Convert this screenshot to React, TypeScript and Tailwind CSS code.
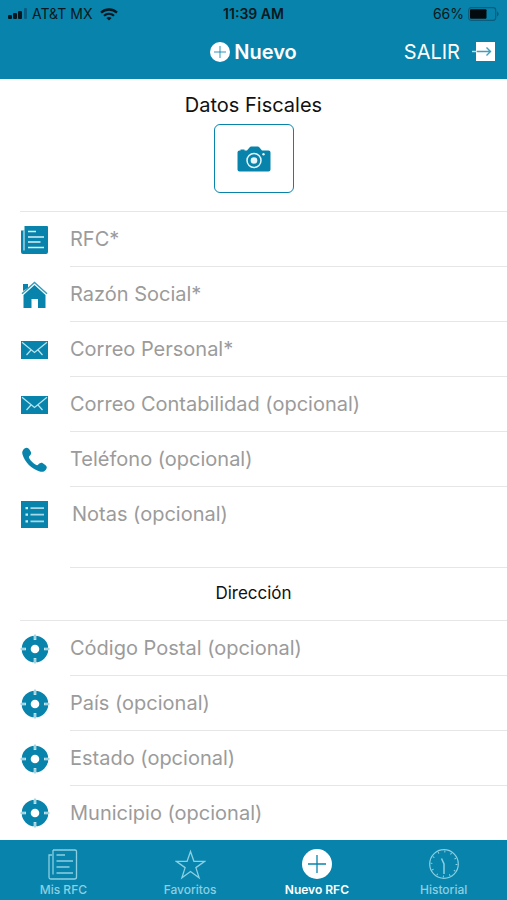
import type { ReactNode } from "react";

const SignalIcon = () => (
  <svg width="20" height="12" viewBox="0 0 20 12" fill="#071820" aria-hidden="true">
    <rect x="0" y="7" width="4" height="4" rx="1" />
    <rect x="5" y="5" width="4" height="6" rx="1" />
    <rect x="10" y="3" width="4" height="8" rx="1" />
    <rect x="16" y="0" width="3" height="11" rx="1" fill="#0a5d82" />
  </svg>
);

const WifiIcon = () => (
  <svg width="18" height="13" viewBox="0 0 18 13" fill="none" stroke="#071820" aria-hidden="true">
    <path d="M1 4.600C5.500.4 12.500.4 17 4.600" strokeWidth="2.400" />
    <path d="M4 7.800c2.900-2.600 7.100-2.600 10 0" strokeWidth="2.200" />
    <path d="M6.400 9.900c1.500-1.300 3.700-1.300 5.200 0L9 12.600z" fill="#071820" stroke="none" />
  </svg>
);

const BatteryIcon = () => (
  <svg width="31" height="14" viewBox="0 0 31 14" aria-hidden="true">
    <rect x=".7" y=".7" width="27" height="12.600" rx="2.500" fill="none" stroke="#0a5d7c" strokeWidth="1.200" />
    <rect x="2" y="2.200" width="16.500" height="9.600" rx="1" fill="#040b0e" />
    <path d="M29 4.500c2.200.8 2.200 4.200 0 5z" fill="#0a5d7c" />
  </svg>
);

const PlusCircle = ({ size }: { size: number }) => (
  <svg width={size} height={size} viewBox="0 0 30 30" aria-hidden="true">
    <circle cx="15" cy="15" r="15" fill="#fff" />
    <path d="M15 6v18M6 15h18" stroke="#0884ac" strokeWidth="1.300" />
  </svg>
);

const ExitIcon = () => (
  <svg width="23" height="20" viewBox="0 0 23 20" fill="none" aria-hidden="true">
    <path d="M4 0h19v19H4z" fill="#fff" />
    <path d="M0 9.500h5" stroke="#b8deea" strokeWidth="1.400" />
    <path d="M5 9.500h13M14.500 5.500l4 4-4 4" stroke="#3f9fbd" strokeWidth="1.400" />
  </svg>
);

const CameraIcon = () => (
  <svg width="34" height="26" viewBox="0 0 34 26" aria-hidden="true">
    <path
      d="M2.500 4.500h1V3.400h4v1.100H10l2.500-3Q13.200.6 14.300.6h6.400q1.100 0 1.800.9l2.500 3h6.500q2 0 2 2v17q0 2-2 2H2.500q-2 0-2-2v-17q0-2 2-2z"
      fill="#0884ac"
    />
    <circle cx="17" cy="14.500" r="7" fill="none" stroke="#e5f5f9" strokeWidth="1.500" />
    <circle cx="17" cy="14.500" r="3.300" fill="#e5f5f9" />
    <circle cx="26.500" cy="8.300" r="1.200" fill="#e5f5f9" />
  </svg>
);

const DocumentIcon = () => (
  <svg width="28" height="28" viewBox="0 0 28 28" aria-hidden="true">
    <path d="M3.500 0H26q1 0 1 1v25q0 2-2 2H2q-2 0-2-2V4.500h3.500z" fill="#0884ac" />
    <path d="M3 4.500V24.500" fill="none" stroke="#d7f0f7" strokeWidth="1.100" />
    <path d="M7 5.500h8M7 11h16M7 16h12.500M7 21.500h16" stroke="#d7f0f7" strokeWidth="1.300" />
  </svg>
);

const HouseIcon = () => (
  <svg width="28" height="28" viewBox="0 0 28 28" aria-hidden="true">
    <path d="M2 10V3h5v4" fill="#0884ac" />
    <path d="M1 12.800L13.500 1.500 26 12.800" fill="none" stroke="#3c9dbb" strokeWidth="1.500" />
    <path d="M2.500 14L13.500 4l11 10v13H17v-9h-6.500v9h-8z" fill="#0884ac" />
  </svg>
);

const MailIcon = () => (
  <svg width="28" height="18" viewBox="0 0 28 18" fill="none" stroke="#b8e6f1" strokeWidth="1.200" aria-hidden="true">
    <path d="M0 0h27v18H0z" fill="#0884ac" stroke="none" />
    <path d="M1 1.200l12.500 10.300L26 1.200M5.500 14l4.500-5M21.500 14L17 9" />
  </svg>
);

const PhoneIcon = () => (
  <svg width="28" height="28" viewBox="0 0 28 28" fill="#0884ac" aria-hidden="true">
    <path d="M3.500 2.500C5.500 1 7.200 1.500 8.600 3.800l1.300 2.300c.7 1.500 0 2.700-1.400 3.900-.8.700-.7 1.500-.1 2.500 1.700 2.700 3.700 4.700 6.400 6.300 1 .6 1.800.6 2.500-.2 1.500-1.700 3-2.400 4.500-1.400l2.500 1.800c2 1.500 1.900 3 .4 4.900-1.500 1.800-3.400 2.300-6 1.600C10.500 23 3.800 16.200 1.500 8.500.8 6 1.500 4 3.500 2.500z" />
  </svg>
);

const ListIcon = () => (
  <svg width="28" height="28" viewBox="0 0 28 28" aria-hidden="true">
    <path d="M0 0h27v27H0z" fill="#0884ac" />
    <path d="M9.500 7.200h13.500M9.500 13.700h13.500M9.500 20.300h13.500" stroke="#a6d9e7" strokeWidth="1.700" />
    <path d="M4.500 7.200h2.500M4.500 13.700h2.500M4.500 20.300h2.500" stroke="#c9edf6" strokeWidth="2.200" />
  </svg>
);

const TargetIcon = () => (
  <svg width="30" height="30" viewBox="0 0 30 30" fill="none" aria-hidden="true">
    <circle cx="15" cy="15" r="8.800" stroke="#0884ac" strokeWidth="9" />
    <path d="M15 1v5M15 24v5M1 15h5M24 15h5" stroke="#e6f6fa" strokeWidth="2.600" />
    <path d="M15 .5v5M15 24.500v5M.5 15h5M24.500 15h5" stroke="#5fb3cb" strokeWidth="1" />
  </svg>
);

const DocumentTabIcon = () => (
  <svg width="30" height="31" viewBox="0 0 30 31" fill="none" stroke="#8bcfe2" strokeWidth="1.300" aria-hidden="true">
    <path d="M5 1h22q1.500 0 1.500 1.500V28q0 2-2 2H3q-2 0-2-2V6h3" />
    <path d="M5 1v24.500M8.500 6H17M8.500 12H25M8.500 18h13M8.500 24H25" />
  </svg>
);

const StarTabIcon = () => (
  <svg width="31" height="31" viewBox="0 0 31 31" fill="none" stroke="#8bcfe2" strokeWidth="1.300" aria-hidden="true">
    <path d="M15.500 2.500l3.400 9.800h10.800l-8.800 6.300 3.200 10.100-8.600-6.200-8.600 6.200 3.200-10.100-8.800-6.300h10.800z" />
  </svg>
);

const ClockTabIcon = () => (
  <svg width="30" height="30" viewBox="0 0 30 30" fill="none" stroke="#8bcfe2" strokeWidth="1.200" aria-hidden="true">
    <circle cx="15" cy="15" r="14.300" />
    <circle cx="15" cy="15" r="12.500" strokeDasharray="1 5.545" strokeWidth="1.800" />
    <path d="M12.500 9.500l2.500 5.500v10" strokeWidth="1.500" />
  </svg>
);

type Field = { label: string; name: string; type: string; icon: ReactNode };

const fiscalFields: Field[] = [
  { label: "RFC*", name: "rfc", type: "text", icon: <DocumentIcon /> },
  { label: "Razón Social*", name: "razon", type: "text", icon: <HouseIcon /> },
  { label: "Correo Personal*", name: "correo", type: "email", icon: <MailIcon /> },
  { label: "Correo Contabilidad (opcional)", name: "contabilidad", type: "email", icon: <MailIcon /> },
  { label: "Teléfono (opcional)", name: "telefono", type: "tel", icon: <PhoneIcon /> },
];

const addressFields: Field[] = [
  { label: "Código Postal (opcional)", name: "cp", type: "text", icon: <TargetIcon /> },
  { label: "País (opcional)", name: "pais", type: "text", icon: <TargetIcon /> },
  { label: "Estado (opcional)", name: "estado", type: "text", icon: <TargetIcon /> },
  { label: "Municipio (opcional)", name: "municipio", type: "text", icon: <TargetIcon /> },
];

const tabs = [
  { label: "Mis RFC", icon: <DocumentTabIcon />, active: false },
  { label: "Favoritos", icon: <StarTabIcon />, active: false },
  { label: "Nuevo RFC", icon: <PlusCircle size={30} />, active: true },
  { label: "Historial", icon: <ClockTabIcon />, active: false },
];

const FieldRow = ({ label, name, type, icon }: Field) => (
  <div className="group flex pl-5">
    <label htmlFor={name} className="mr-5 flex w-[30px] items-center justify-center">
      {icon}
    </label>
    <input
      id={name}
      name={name}
      type={type}
      aria-label={label}
      placeholder={label}
      className="h-[55px] min-w-0 flex-1 border-b border-[#e6e6e6] bg-transparent text-xl text-gray-900 outline-none group-last:h-[54px] group-last:border-b-0 placeholder:text-[#9b9b9b]"
    />
  </div>
);

export default function App() {
  return (
    <div className="flex min-h-screen flex-col bg-white font-['Inter','Liberation_Sans',sans-serif] text-[#111111]">
      <header className="bg-[#0884ac]">
        <div className="grid h-7 grid-cols-3 items-center px-2 text-sm text-[#071820]">
          <div className="flex items-center gap-1">
            <SignalIcon />
            <span className="mr-1 whitespace-nowrap">AT&amp;T MX</span>
            <WifiIcon />
          </div>
          <span className="text-center font-semibold">11:39 AM</span>
          <div className="flex items-center justify-end gap-1">
            <span>66%</span>
            <BatteryIcon />
          </div>
        </div>
        <div className="grid h-[51px] grid-cols-3 items-center px-3 pb-1 text-xl text-white">
          <h1 className="col-start-2 flex items-center justify-center gap-1 font-semibold">
            <PlusCircle size={20} />
            Nuevo
          </h1>
          <button type="button" className="flex items-center justify-end gap-3">
            SALIR
            <ExitIcon />
          </button>
        </div>
      </header>

      <main className="flex-1">
        <form>
          <section>
            <div className="flex flex-col items-center pt-3 pb-[18px]">
              <h2 className="mb-[5px] text-xl leading-7">Datos Fiscales</h2>
              <button
                type="button"
                aria-label="Tomar foto"
                className="flex h-[69px] w-20 items-center justify-center rounded-md border border-[#0884ac]"
              >
                <CameraIcon />
              </button>
            </div>
            <div className="ml-5 border-t border-[#e6e6e6]" />
            {fiscalFields.map((field) => (
              <FieldRow key={field.name} {...field} />
            ))}
            <div className="flex pl-5">
              <label htmlFor="notas" className="mr-5 flex h-[55px] w-[30px] items-center justify-center">
                <ListIcon />
              </label>
              <textarea
                id="notas"
                name="notas"
                aria-label="Notas (opcional)"
                placeholder="Notas (opcional)"
                className="block h-[81px] min-w-0 flex-1 resize-none border-b border-[#e6e6e6] px-0.5 py-[13px] text-xl text-gray-900 outline-none placeholder:text-[#9b9b9b]"
              />
            </div>
          </section>
          <section>
            <h2 className="ml-5 flex h-[53px] items-center justify-center border-b border-[#e6e6e6] pr-5 text-[17px]">
              Dirección
            </h2>
            {addressFields.map((field) => (
              <FieldRow key={field.name} {...field} />
            ))}
          </section>
        </form>
      </main>

      <nav className="sticky bottom-0 grid h-[60px] grid-cols-4 bg-[#0884ac]">
        {tabs.map((tab) => (
          <a
            key={tab.label}
            href="#"
            aria-current={tab.active ? "page" : undefined}
            className={`flex flex-col items-center pt-2 text-xs ${tab.active ? "font-semibold text-white" : "font-medium text-[#8bcfe2]"}`}
          >
            <span className="flex h-8 items-center">{tab.icon}</span>
            <span className="leading-5">{tab.label}</span>
          </a>
        ))}
      </nav>
    </div>
  );
}
